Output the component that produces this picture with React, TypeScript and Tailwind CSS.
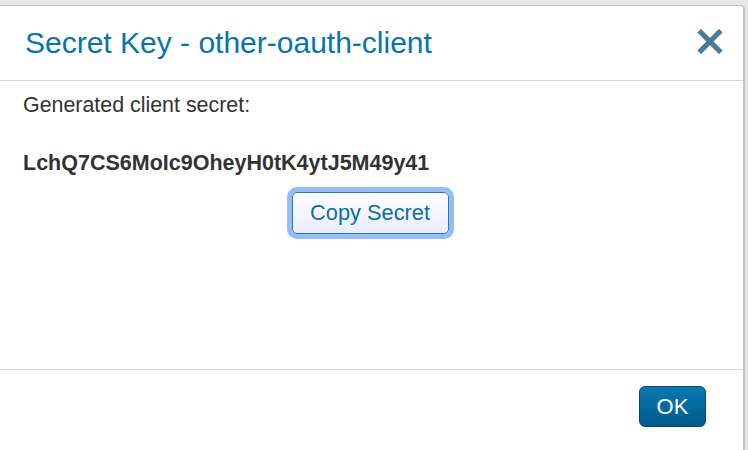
import React from 'react';

const SECRET = 'LchQ7CS6MoIc9OheyH0tK4ytJ5M49y41';

const SecretKeyDialog: React.FC = () => {
  return (
    <div className="h-[450px] w-[748px] overflow-hidden bg-[#e8e8e8] pt-[5px] font-['Liberation_Sans',Arial,sans-serif]">
      <div className="flex h-[445px] w-[745px] flex-col rounded-tr-[4px] border-r-2 border-t border-[#c4c4c4] bg-white">
        {/* header */}
        <div className="flex h-[75px] items-center justify-between border-b border-[#c9dae4] pl-[25px] pr-[20px]">
          <h1 className="text-[30px] leading-none text-[#0874ad]">Secret Key - other-oauth-client</h1>
          <button type="button" className="mb-[4px] text-[#4b7b9b]">
            <svg width="26" height="25" viewBox="0 0 26 25">
              <path d="M4 3.5 L22 21.5 M22 3.5 L4 21.5" stroke="currentColor" strokeWidth="5.2" strokeLinecap="square" />
            </svg>
          </button>
        </div>

        {/* body */}
        <div className="flex flex-1 flex-col px-[23px] pt-[13px]">
          <p className="text-[21.4px] leading-[22px] text-[#333]">Generated client secret:</p>
          <p className="mt-[36px] text-[21.5px] font-bold leading-[22px] text-[#333]">{SECRET}</p>
          <div className="mt-[18px] flex justify-center pr-[3px]">
            <button
              type="button"
              className="h-[42px] w-[157px] rounded-[5px] border border-[#2a7ab0] bg-gradient-to-b from-white to-[#e9edfd] text-[21.8px] text-[#0b6fa4] shadow-[0_0_0_5px_#94bdf7]"
            >
              Copy Secret
            </button>
          </div>
        </div>

        {/* footer */}
        <div className="flex h-[81px] items-start justify-end border-t border-[#dcdcdc] pr-[37px] pt-[16px]">
          <button
            type="button"
            className="h-[41px] w-[67px] rounded-[6px] border border-[#0b4a6f] bg-gradient-to-b from-[#0a79b1] to-[#005a8c] text-[22px] text-white"
          >
            OK
          </button>
        </div>
      </div>
    </div>
  );
};

export default function App() {
  return <SecretKeyDialog />;
}
